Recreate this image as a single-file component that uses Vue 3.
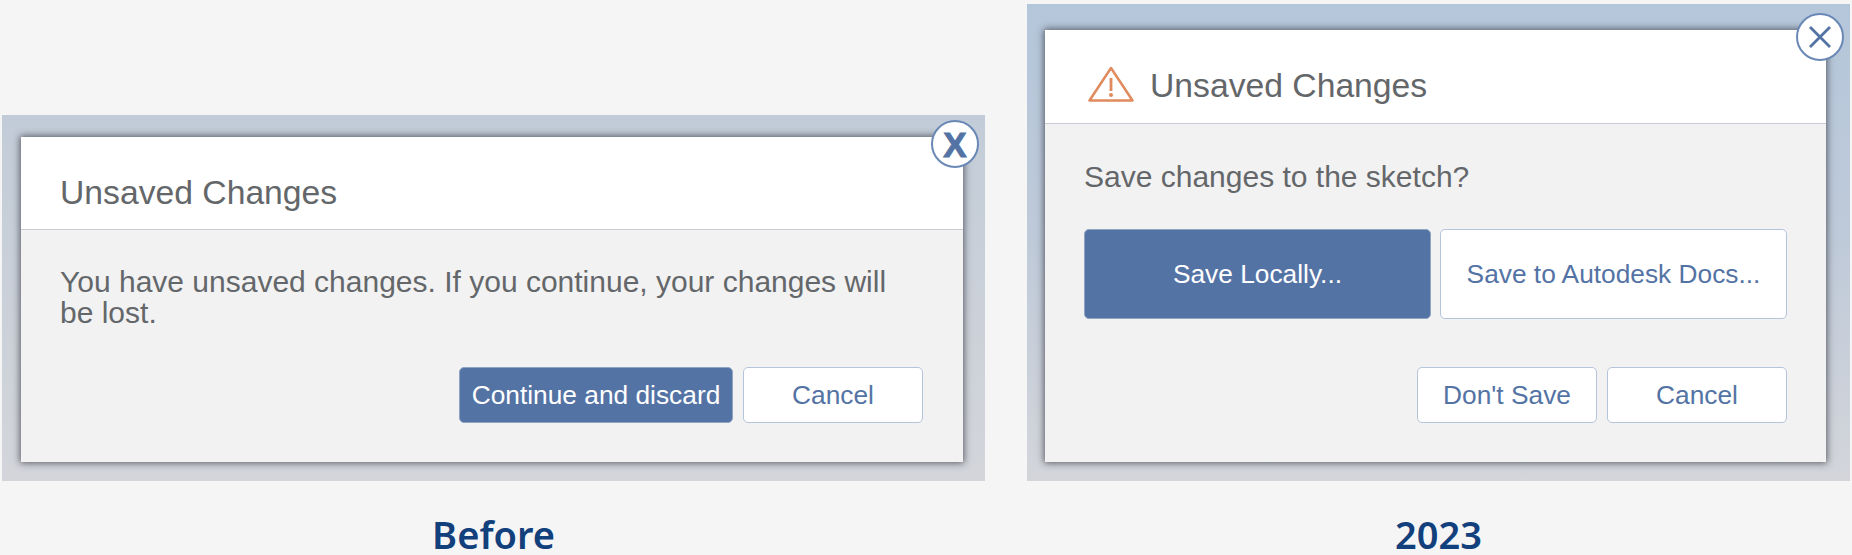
<script setup>
</script>

<template>
  <div class="page">
    <figure class="col before">
      <div class="shot shot-before">
        <div class="dialog">
          <header class="head">
            <span class="title">Unsaved Changes</span>
          </header>
          <div class="body">
            <p class="msg">You have unsaved changes. If you continue, your changes will be lost.</p>
            <div class="actions">
              <button class="btn primary discard">Continue and discard</button>
              <button class="btn cancel-old">Cancel</button>
            </div>
          </div>
          <div class="close close-old">X</div>
        </div>
      </div>
      <figcaption class="cap">Before</figcaption>
    </figure>

    <figure class="col after">
      <div class="shot shot-after">
        <div class="dialog">
          <header class="head head-new">
            <svg class="warn" width="48" height="38" viewBox="0 0 48 38">
              <path d="M24 2 L45.500 34.500 H2.500 Z" fill="none" stroke="#e08a5e" stroke-width="2.500" stroke-linejoin="round" />
              <path d="M24 12v13" stroke="#e08a5e" stroke-width="2.800" />
              <circle cx="24" cy="29" r="2" fill="#e08a5e" />
            </svg>
            <span class="title">Unsaved Changes</span>
          </header>
          <div class="body body-new">
            <p class="msg">Save changes to the sketch?</p>
            <div class="save-row">
              <button class="btn primary big">Save Locally...</button>
              <button class="btn big">Save to Autodesk Docs...</button>
            </div>
            <div class="actions actions-new">
              <button class="btn small">Don't Save</button>
              <button class="btn small">Cancel</button>
            </div>
          </div>
          <div class="close close-new">
            <svg width="26" height="26" viewBox="0 0 26 26">
              <path d="M3 3l20 20M23 3L3 23" stroke="#5473a5" stroke-width="2.800" fill="none" />
            </svg>
          </div>
        </div>
      </div>
      <figcaption class="cap">2023</figcaption>
    </figure>
  </div>
</template>

<style scoped>
.page {
  width: 1852px;
  height: 555px;
  background: #f5f5f5;
  display: flex;
  align-items: flex-end;
  padding-left: 2px;
  box-sizing: border-box;
  font-family: "Liberation Sans", Arial, sans-serif;
}
.col {
  margin: 0;
  display: flex;
  flex-direction: column;
}
.before { width: 983px; }
.after { width: 823px; margin-left: 42px; }
.shot {
  box-sizing: border-box;
  padding: 22px 22px 19px 19px;
}
.shot-before {
  height: 366px;
  background: linear-gradient(#c2ccd8, #d3d5da);
}
.shot-after {
  height: 477px;
  padding: 26px 24px 19px 18px;
  background: linear-gradient(#b4c6da 0%, #bfcad9 50%, #d3d5da 100%);
}
.dialog {
  position: relative;
  height: 100%;
  background: #f2f2f2;
  box-shadow: 0 0 7px 1px rgba(40, 40, 50, 0.7);
  display: flex;
  flex-direction: column;
}
.head {
  height: 93px;
  flex: none;
  box-sizing: border-box;
  background: #fff;
  border-bottom: 1px solid #c8cdd3;
  display: flex;
  align-items: center;
  padding: 19px 0 0 39px;
}
.head-new {
  height: 94px;
  padding: 17px 0 0 42px;
}
.warn {
  margin-right: 15px;
  flex: none;
}
.title {
  font-size: 33.700px;
  color: #64676a;
}
.body {
  flex: 1;
  padding: 36px 40px 0 39px;
  box-sizing: border-box;
  display: flex;
  flex-direction: column;
}
.body-new {
  padding: 37px 39px 0 39px;
}
.msg {
  margin: 0;
  font-size: 30px;
  line-height: 31px;
  color: #64676a;
}
.actions {
  margin-top: auto;
  margin-bottom: 39px;
  display: flex;
  justify-content: flex-end;
  gap: 10px;
}
.save-row {
  margin-top: 37px;
  display: flex;
  gap: 9px;
}
.btn {
  box-sizing: border-box;
  height: 56px;
  border: 1px solid #b4c4da;
  border-radius: 5px;
  background: #fff;
  color: #5473a5;
  font-family: inherit;
  font-size: 26.300px;
  padding: 0;
}
.primary {
  background: #5473a5;
  border-color: #8fa3c2;
  color: #fff;
}
.discard { width: 274px; }
.cancel-old { width: 180px; }
.big {
  width: 347px;
  height: 90px;
}
.small {
  width: 180px;
}
.close {
  position: absolute;
  box-sizing: border-box;
  width: 48px;
  height: 48px;
  border-radius: 50%;
  background: #fff;
  border: 2px solid #6a88b5;
  display: flex;
  align-items: center;
  justify-content: center;
}
.close-old {
  top: -17px;
  right: -16px;
  font-size: 35px;
  font-weight: 700;
  line-height: 1;
  color: #5473a5;
  -webkit-text-stroke: 1px #5473a5;
}
.close-new {
  top: -17px;
  right: -18px;
}
.cap {
  height: 74px;
  box-sizing: border-box;
  padding-top: 34px;
  text-align: center;
  font-family: "Noto Sans", sans-serif;
  font-weight: 600;
  font-size: 38px;
  line-height: 38px;
  color: #12407c;
}
</style>

<style>
html, body { margin: 0; background: #f5f5f5; }
</style>
